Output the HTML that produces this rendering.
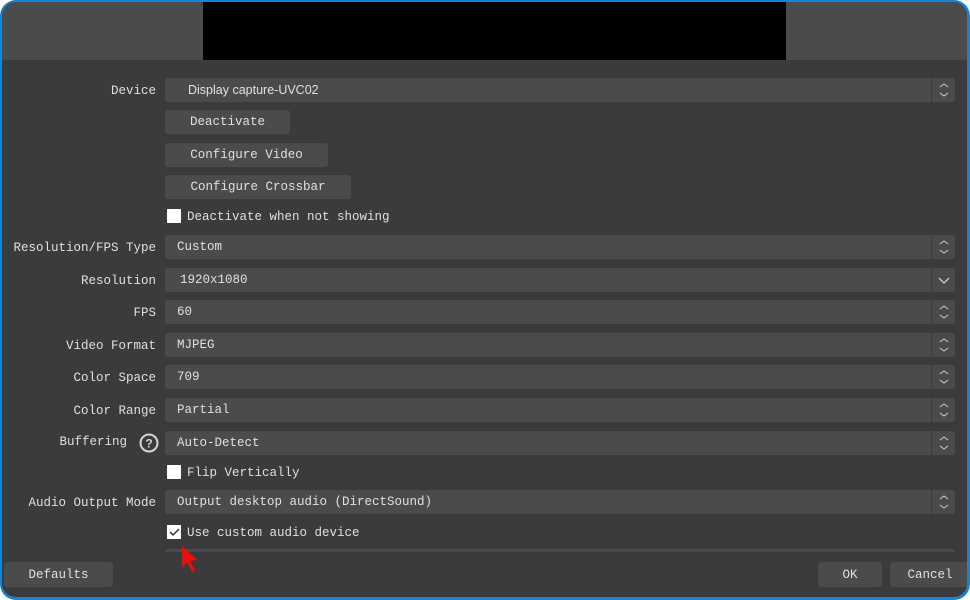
<!DOCTYPE html>
<html><head><style>
*{margin:0;padding:0;box-sizing:border-box}
body{width:970px;height:600px;background:#fff;overflow:hidden;font-family:"Liberation Mono","Noto Sans CJK SC",monospace;font-size:12.5px;color:#e0e0e0}
#win{position:absolute;left:0;top:0;width:970px;height:600px;border:2px solid #1384d8;border-right-width:3px;border-bottom-width:3px;border-radius:16px;background:#3b3a3c;overflow:hidden}
.a{position:absolute}
.lbl{position:absolute;right:811px;text-align:right;white-space:nowrap;line-height:16px}
.cb{position:absolute;left:163px;width:790px;height:24px;background:#4b4b4b;border-radius:3px;line-height:24px;padding-left:12px;white-space:nowrap}
.cb .sp{position:absolute;right:0;top:0;width:24px;height:24px;border-left:1px solid #3b3a3c}
.btn{position:absolute;height:24px;background:#4b4b4b;border-radius:3px;line-height:24px;text-align:center;white-space:nowrap}
.chk{position:absolute;left:165px;width:14px;height:14px;background:#fff}
.ct{position:absolute;left:185px;line-height:16px;white-space:nowrap}
</style></head><body>
<div id="win">
<div class="a" style="left:0;top:0;width:970px;height:58px;background:#4b4b4b"></div>
<div class="a" style="left:201px;top:0;width:583px;height:58px;background:#000"></div>

<div class="lbl" style="top:81px">Device</div>
<div class="cb" style="top:76px;font-family:'Liberation Sans',sans-serif;font-size:12.5px;padding-left:23px">Display capture-UVC02<div class="sp"><svg width="24" height="24"><path d="M8 9l4-3 4 3M8 15l4 3 4-3" stroke="#ccd" fill="none"/></svg></div></div>
<div class="btn" style="left:163px;top:108px;width:125px">Deactivate</div>
<div class="btn" style="left:163px;top:141px;width:163px">Configure Video</div>
<div class="btn" style="left:163px;top:173px;width:186px">Configure Crossbar</div>
<div class="chk" style="top:207px"></div><div class="ct" style="top:207px">Deactivate when not showing</div>

<div class="lbl" style="top:238px">Resolution/FPS Type</div>
<div class="cb" style="top:233px">Custom<div class="sp"><svg width="24" height="24"><path d="M8 9l4-3 4 3M8 15l4 3 4-3" stroke="#ccd" fill="none"/></svg></div></div>
<div class="lbl" style="top:271px">Resolution</div>
<div class="cb" style="top:266px;padding-left:15px">1920x1080<div class="sp"><svg width="24" height="24"><path d="M7 10l5 5 5-5" stroke="#ccd" fill="none" stroke-width="1.3"/></svg></div></div>
<div class="lbl" style="top:303px">FPS</div>
<div class="cb" style="top:298px">60<div class="sp"><svg width="24" height="24"><path d="M8 9l4-3 4 3M8 15l4 3 4-3" stroke="#ccd" fill="none"/></svg></div></div>
<div class="lbl" style="top:336px">Video Format</div>
<div class="cb" style="top:331px">MJPEG<div class="sp"><svg width="24" height="24"><path d="M8 9l4-3 4 3M8 15l4 3 4-3" stroke="#ccd" fill="none"/></svg></div></div>
<div class="lbl" style="top:368px">Color Space</div>
<div class="cb" style="top:363px">709<div class="sp"><svg width="24" height="24"><path d="M8 9l4-3 4 3M8 15l4 3 4-3" stroke="#ccd" fill="none"/></svg></div></div>
<div class="lbl" style="top:401px">Color Range</div>
<div class="cb" style="top:396px">Partial<div class="sp"><svg width="24" height="24"><path d="M8 9l4-3 4 3M8 15l4 3 4-3" stroke="#ccd" fill="none"/></svg></div></div>
<div class="lbl" style="top:432px;right:840px">Buffering</div>
<svg class="a" style="left:136px;top:430px" width="22" height="22"><circle cx="11" cy="11" r="8.5" stroke="#cfd8d0" stroke-width="2" fill="none"/><text x="11" y="15.5" text-anchor="middle" font-family="Liberation Sans" font-weight="bold" font-size="12" fill="#cfd8d0">?</text></svg>
<div class="cb" style="top:429px">Auto-Detect<div class="sp"><svg width="24" height="24"><path d="M8 9l4-3 4 3M8 15l4 3 4-3" stroke="#ccd" fill="none"/></svg></div></div>
<div class="chk" style="top:463px"></div><div class="ct" style="top:463px">Flip Vertically</div>
<div class="lbl" style="top:493px">Audio Output Mode</div>
<div class="cb" style="top:488px">Output desktop audio (DirectSound)<div class="sp"><svg width="24" height="24"><path d="M8 9l4-3 4 3M8 15l4 3 4-3" stroke="#ccd" fill="none"/></svg></div></div>
<div class="chk" style="top:523px"><svg width="14" height="14"><path d="M3 7l3 3 6-6" stroke="#333" stroke-width="1.5" fill="none"/></svg></div><div class="ct" style="top:523px">Use custom audio device</div>
<div class="a" style="left:163px;top:547px;width:790px;height:3px;background:#4b4b4b;border-radius:3px 3px 0 0"></div>
<svg class="a" style="left:177px;top:542px" width="20" height="32"><path d="M3 2l0 22 5-6 5 10 3-2-5-9 7-1z" fill="#e8100c"/></svg>

<div class="btn" style="left:2px;top:560px;width:109px;height:25px;line-height:26px">Defaults</div>
<div class="btn" style="left:816px;top:560px;width:64px;height:25px;line-height:26px">OK</div>
<div class="btn" style="left:888px;top:560px;width:80px;height:25px;line-height:26px">Cancel</div>
</div>
</body></html>
